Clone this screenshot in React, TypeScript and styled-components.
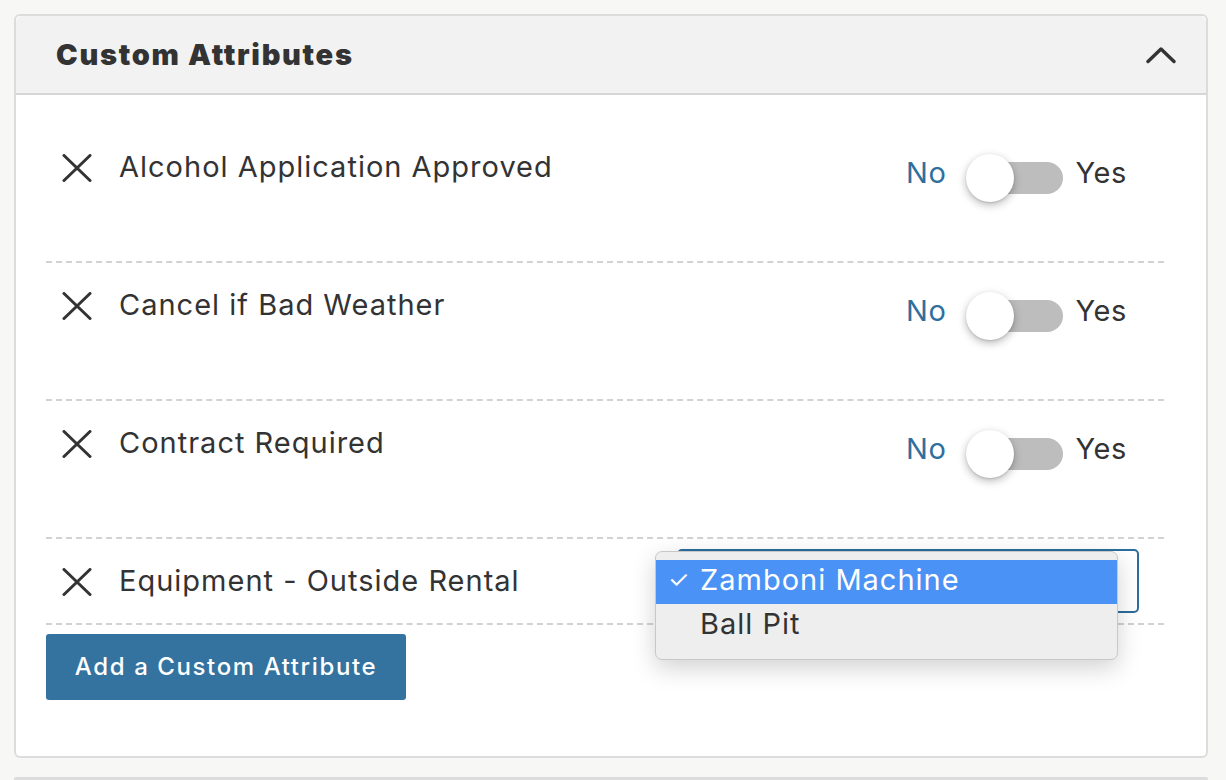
import React from "react";
import styled, { createGlobalStyle } from "styled-components";

const GlobalStyle = createGlobalStyle`
  body {
    margin: 0;
    background: #f7f7f6;
    font-family: Inter, "Liberation Sans", sans-serif;
    color: #333;
  }
`;

const Page = styled("div")`
  padding: 14px 18px 0 14px;
  height: 780px;
  box-sizing: border-box;
  overflow: hidden;
  display: flex;
  flex-direction: column;
  gap: 19px;
`;

const Panel = styled("section")`
  background: #fff;
  border: 2px solid #dcdcdc;
  border-radius: 6px;
`;

const NextPanel = styled("div")`
  height: 40px;
  background: #f2f2f2;
  border: 2px solid #dcdcdc;
  border-radius: 6px;
`;

const Header = styled("header")`
  height: 77px;
  background: #f2f2f2;
  border-bottom: 2px solid #d6d6d6;
  border-radius: 6px 6px 0 0;
  display: flex;
  align-items: center;
  justify-content: space-between;
  padding: 0 30px 0 40px;
`;

const Title = styled("h2")`
  margin: 0;
  font-size: 29px;
  font-weight: 900;
  letter-spacing: 1.7px;
  color: #333;
`;

const Body = styled("div")`
  padding: 30px 42px 56px 30px;
`;

const Row = styled("div")<{ $height: number }>`
  position: relative;
  height: ${(p) => p.$height}px;
  box-sizing: border-box;
  border-bottom: 2px dashed #d2d2d2;
  display: flex;
  align-items: flex-start;
  padding: 0 37px 0 16px;
`;

const RemoveButton = styled("button")<{ $top: number }>`
  border: none;
  background: none;
  padding: 0;
  margin-top: ${(p) => p.$top}px;
  width: 30px;
  height: 30px;
  display: flex;
  align-items: center;
  justify-content: center;
  color: #333;
  cursor: pointer;
`;

const Label = styled("span")<{ $top: number }>`
  margin-top: ${(p) => p.$top}px;
  margin-left: 27px;
  font-size: 29px;
  letter-spacing: 1px;
  line-height: 36px;
  color: #333;
  flex: 1;
`;

const ToggleGroup = styled("div")`
  margin-top: 29px;
  height: 48px;
  display: flex;
  align-items: center;
`;

const ToggleText = styled("span")<{ $active?: boolean }>`
  font-size: 29px;
  letter-spacing: 0.6px;
  padding-bottom: 11px;
  color: ${(p) => (p.$active ? "#2e6f9e" : "#333")};
`;

const Switch = styled("div")`
  position: relative;
  width: 97px;
  height: 48px;
  margin: 0 13px 0 19px;
`;

const Track = styled("div")`
  position: absolute;
  left: 8px;
  right: 0;
  top: 8px;
  height: 32px;
  border-radius: 16px;
  background: #bdbdbd;
`;

const Knob = styled("div")`
  position: absolute;
  left: 0;
  top: 0;
  width: 48px;
  height: 48px;
  border-radius: 50%;
  background: #fff;
  box-shadow: 0 3px 8px rgba(0, 0, 0, 0.28), 0 1px 2px rgba(0, 0, 0, 0.12);
`;

const SelectBox = styled("div")`
  position: absolute;
  right: 25px;
  top: 10px;
  width: 462px;
  height: 64px;
  box-sizing: border-box;
  border: 2px solid #2b6d9c;
  border-radius: 5px;
  background: #fff;
`;

const Menu = styled("ul")`
  position: absolute;
  right: 46px;
  top: 12px;
  width: 463px;
  box-sizing: border-box;
  margin: 0;
  padding: 8px 0 11px;
  list-style: none;
  background: #eeeeee;
  border: 1px solid #c8c8c8;
  border-radius: 7px;
  box-shadow: 0 8px 24px rgba(0, 0, 0, 0.18);
  z-index: 2;
`;

const MenuItem = styled("li")<{ $selected?: boolean }>`
  height: 44px;
  display: flex;
  align-items: center;
  padding-left: 12px;
  padding-bottom: 5px;
  box-sizing: border-box;
  font-size: 29px;
  letter-spacing: 1px;
  background: ${(p) => (p.$selected ? "#4a92f6" : "transparent")};
  color: ${(p) => (p.$selected ? "#fff" : "#333")};
`;

const Check = styled("span")`
  width: 32px;
  font-size: 24px;
`;

const AddButton = styled("button")`
  margin-top: 9px;
  width: 360px;
  height: 66px;
  border: none;
  border-radius: 3px;
  background: #3473a0;
  color: #fff;
  font-family: Inter, "Liberation Sans", sans-serif;
  font-size: 24px;
  font-weight: 500;
  letter-spacing: 1.6px;
  padding-bottom: 3px;
  cursor: pointer;
`;

const CloseIcon = () => (
  <svg width="30" height="28" viewBox="0 0 30 28" fill="none">
    <path
      d="M2 1.5 L28 26.5 M28 1.5 L2 26.5"
      stroke="#333"
      strokeWidth="3"
      strokeLinecap="round"
    />
  </svg>
);

const ChevronUp = () => (
  <svg width="30" height="18" viewBox="0 0 30 18" fill="none">
    <path
      d="M2 15.5 L15 3 L28 15.5"
      stroke="#333"
      strokeWidth="3.4"
      strokeLinecap="round"
      strokeLinejoin="round"
    />
  </svg>
);

const toggleRows = ["Alcohol Application Approved", "Cancel if Bad Weather", "Contract Required"];

export default function App() {
  return (
    <>
      <GlobalStyle />
      <Page>
        <Panel>
          <Header>
            <Title>Custom Attributes</Title>
            <ChevronUp />
          </Header>
          <Body>
            {toggleRows.map((name) => (
              <Row $height={138} key={name}>
                <RemoveButton $top={28}>
                  <CloseIcon />
                </RemoveButton>
                <Label $top={24}>{name}</Label>
                <ToggleGroup>
                  <ToggleText $active>No</ToggleText>
                  <Switch>
                    <Track />
                    <Knob />
                  </Switch>
                  <ToggleText>Yes</ToggleText>
                </ToggleGroup>
              </Row>
            ))}
            <Row $height={86}>
              <RemoveButton $top={28}>
                <CloseIcon />
              </RemoveButton>
              <Label $top={24}>Equipment - Outside Rental</Label>
              <SelectBox />
              <Menu>
                <MenuItem $selected>
                  <Check>✓</Check>Zamboni Machine
                </MenuItem>
                <MenuItem>
                  <Check />Ball Pit
                </MenuItem>
              </Menu>
            </Row>
            <AddButton>Add a Custom Attribute</AddButton>
          </Body>
        </Panel>
        <NextPanel />
      </Page>
    </>
  );
}
